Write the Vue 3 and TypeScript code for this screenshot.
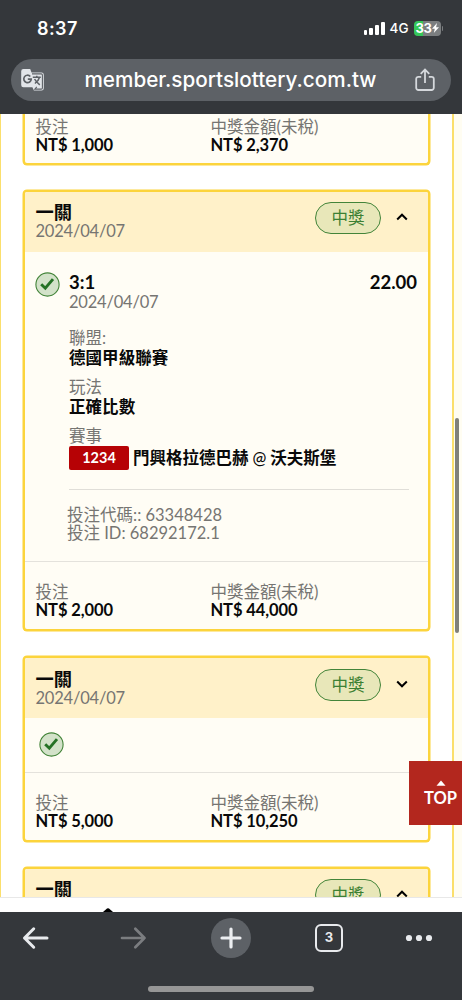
<script setup lang="ts">
interface Slip {
  id: number
  stake: string
  prize: string
  open: boolean
}

const title = '一關'
const date = '2024/04/07'
const slips: Slip[] = [
  { id: 1, stake: 'NT$ 2,000', prize: 'NT$ 44,000', open: true },
  { id: 2, stake: 'NT$ 5,000', prize: 'NT$ 10,250', open: false },
]
const bars: number[] = [5, 7, 10, 13]
</script>

<template>
  <div class="screen">
    <header class="chrome-top">
      <div class="status">
        <span class="clock">8:37</span>
        <div class="signals">
          <div class="bars">
            <i v-for="h in bars" :key="h" :style="{ height: h + 'px' }"></i>
          </div>
          <span class="net">4G</span>
          <div class="battery">
            <span>33</span>
            <svg width="7" height="10" viewBox="0 0 7 10"><path d="M5 0 0 5.700h2.800L1.800 10 7 4.200H4.100z" fill="#fff" /></svg>
          </div>
          <i class="cap"></i>
        </div>
      </div>
      <div class="address">
        <svg class="translate" width="24" height="24" viewBox="0 0 24 24">
          <path d="M2.400 1h6.800l1.300 3.400h10a2.300 2.300 0 0 1 2.300 2.300v13.600a2.300 2.300 0 0 1-2.300 2.300h-7.600l-1.500-3.400H2.400A2.200 2.200 0 0 1 .2 17V3.200A2.200 2.200 0 0 1 2.400 1z" fill="#e2e5e9" />
          <path d="M11 5.900h9.300q1.100 0 1.100 1.100v13q0 1.100-1.100 1.100h-6.500l2-2.300" fill="none" stroke="#5d6166" stroke-width="1.100" />
          <path d="M9.300 8.500A3.700 3.700 0 1 0 10.200 11.100H6.800" fill="none" stroke="#5d6166" stroke-width="1.700" />
          <path d="M11.800 9.300h8M15.800 7.800v1.500M18.400 9.500c-.6 2.600-2.200 4.300-4.500 6M13.600 11c.9 2.100 2.700 3.900 5.200 5.900" fill="none" stroke="#5d6166" stroke-width="1.500" />
        </svg>
        <span class="url">member.sportslottery.com.tw</span>
        <svg class="share" width="20" height="24" viewBox="0 0 20 24">
          <path d="M6.200 8.800H3.400a2.200 2.200 0 0 0-2.200 2.200v8.800A2.200 2.200 0 0 0 3.400 22h13.200a2.200 2.200 0 0 0 2.200-2.200V11a2.200 2.200 0 0 0-2.200-2.200h-2.800M10 15V2M5.700 5.900 10 1.600l4.300 4.300" fill="none" stroke="#d5d8dc" stroke-width="1.800" />
        </svg>
      </div>
    </header>

    <main class="page">
      <div class="list">
        <section class="card first">
          <div class="totals">
            <div><p class="label">投注</p><p class="value">NT$ 1,000</p></div>
            <div><p class="label">中獎金額(未稅)</p><p class="value">NT$ 2,370</p></div>
          </div>
        </section>

        <section v-for="s in slips" :key="s.id" class="card">
          <div class="head">
            <div class="name">
              <h2>{{ title }}</h2>
              <p class="date">{{ date }}</p>
            </div>
            <span class="badge">中獎</span>
            <svg class="chev" width="12" height="8" viewBox="0 0 12 8">
              <path :d="s.open ? 'M1.200 6.500 6 1.700l4.800 4.800' : 'M1.200 1.500 6 6.300l4.800-4.800'" fill="none" stroke="#000" stroke-width="2" />
            </svg>
          </div>

          <div v-if="s.open" class="detail">
            <svg class="tick" width="25" height="25" viewBox="0 0 25 25">
              <circle cx="12.500" cy="12.500" r="11.600" fill="#d3e2c9" stroke="#438439" stroke-width="1.100" />
              <path d="m6.200 12.200 4.100 4L18 7.100" fill="none" stroke="#257225" stroke-width="2.900" />
            </svg>
            <div class="body">
              <div class="pick"><span>3:1</span><span class="odds">22.00</span></div>
              <p class="date">{{ date }}</p>
              <p class="label league">聯盟:</p>
              <p class="value">德國甲級聯賽</p>
              <p class="label play">玩法</p>
              <p class="value">正確比數</p>
              <p class="label match">賽事</p>
              <div class="fixture">
                <span class="code">1234</span>
                <span class="teams">門興格拉德巴赫 <em>@</em> 沃夫斯堡</span>
              </div>
              <div class="ids">
                <p>投注代碼:: 63348428</p>
                <p>投注 ID: 68292172.1</p>
              </div>
            </div>
          </div>
          <div v-else class="compact">
            <svg width="25" height="25" viewBox="0 0 25 25">
              <circle cx="12.500" cy="12.500" r="11.600" fill="#d3e2c9" stroke="#438439" stroke-width="1.100" />
              <path d="m6.200 12.200 4.100 4L18 7.100" fill="none" stroke="#257225" stroke-width="2.900" />
            </svg>
          </div>

          <div class="totals ruled">
            <div><p class="label">投注</p><p class="value">{{ s.stake }}</p></div>
            <div><p class="label">中獎金額(未稅)</p><p class="value">{{ s.prize }}</p></div>
          </div>
        </section>

        <section class="card">
          <div class="head">
            <div class="name">
              <h2>{{ title }}</h2>
              <p class="date">{{ date }}</p>
            </div>
            <span class="badge">中獎</span>
            <svg class="chev" width="12" height="8" viewBox="0 0 12 8">
              <path d="M1.200 6.500 6 1.700l4.800 4.800" fill="none" stroke="#000" stroke-width="2" />
            </svg>
          </div>
        </section>
      </div>
      <div class="gutter"></div>
      <i class="scrollbar"></i>
      <div class="top-btn">
        <svg width="10" height="6" viewBox="0 0 10 6"><path d="M.5 5.700 5 .6l4.500 5.100z" fill="#fff" /></svg>
        <span>TOP</span>
      </div>
    </main>

    <div class="sheet">
      <svg width="10" height="5" viewBox="0 0 10 5"><path d="M0 5V4L4 .6q1-.8 2 0L10 4v1z" fill="#000" /></svg>
    </div>

    <footer class="chrome-bottom">
      <nav class="tools">
        <svg width="98" height="42" viewBox="0 0 98 42">
          <path d="M47 21H24.500M33.700 11.800 24.500 21l9.200 9.200" fill="none" stroke="#e8eaed" stroke-width="3" stroke-linecap="round" stroke-linejoin="round" />
        </svg>
        <svg width="98" height="42" viewBox="0 0 98 42">
          <path d="M24 21h22.500M37.300 11.800l9.200 9.200-9.200 9.200" fill="none" stroke="#7b7d80" stroke-width="2.700" stroke-linecap="round" stroke-linejoin="round" />
        </svg>
        <svg width="70" height="42" viewBox="0 0 70 42">
          <circle cx="35" cy="21" r="20" fill="#5d6166" />
          <path d="M35 12v18M26 21h18" fill="none" stroke="#eceef1" stroke-width="3.200" stroke-linecap="round" />
        </svg>
        <div class="tabs"><span>3</span></div>
        <svg class="more" width="28" height="42" viewBox="0 0 28 42">
          <g fill="#e8eaed"><circle cx="4" cy="21" r="3.100" /><circle cx="14" cy="21" r="3.100" /><circle cx="24" cy="21" r="3.100" /></g>
        </svg>
      </nav>
      <i class="home"></i>
    </footer>
  </div>
</template>

<style>
html,
body {
  margin: 0;
  overflow: hidden;
}
</style>

<style scoped>
.screen {
  width: 462px;
  height: 1000px;
  display: flex;
  flex-direction: column;
  overflow: hidden;
  background: #fff;
  color: #090909;
  font-family: Lato, "Noto Sans CJK TC", sans-serif;
  font-size: 16.500px;
}
p,
h2 {
  margin: 0;
}
i {
  display: block;
}
svg {
  display: block;
  flex: none;
}
.chrome-top {
  flex: none;
  height: 114px;
  box-sizing: border-box;
  padding: 16px 11px 0;
  background: #34373b;
  color: #fff;
  font-family: Inter, sans-serif;
}
.status {
  height: 24px;
  display: flex;
  align-items: center;
  justify-content: space-between;
  padding: 0 8px 0 26px;
}
.clock {
  font-size: 18px;
  font-weight: 600;
  letter-spacing: 0.400px;
}
.signals {
  display: flex;
  align-items: center;
}
.bars {
  display: flex;
  align-items: flex-end;
  gap: 2px;
  height: 13px;
}
.bars i {
  width: 3.700px;
  border-radius: 1px;
  background: #fff;
}
.net {
  margin-left: 5px;
  font-size: 13.500px;
  font-weight: 500;
}
.battery {
  display: flex;
  align-items: center;
  width: 27px;
  height: 15px;
  margin-left: 5px;
  box-sizing: border-box;
  padding-left: 2px;
  border-radius: 4px;
  background: linear-gradient(90deg, #35c75a 0 9px, #7b7e80 9px);
  font-size: 13px;
  font-weight: 700;
  letter-spacing: -0.300px;
}
.cap {
  width: 1.500px;
  height: 5px;
  margin-left: 1px;
  border-radius: 0 2px 2px 0;
  background: #7b7e80;
}
.address {
  height: 42px;
  margin-top: 19px;
  display: flex;
  align-items: center;
  box-sizing: border-box;
  padding: 0 16px 0 10px;
  border-radius: 21px;
  background: #5d6166;
}
.url {
  flex: 1;
  margin-right: -1px;
  text-align: center;
  font-size: 20.700px;
  font-weight: 500;
  line-height: 40px;
  white-space: nowrap;
}
.share {
  position: relative;
}
.page {
  position: relative;
  flex: none;
  height: 783px;
  display: flex;
  overflow: hidden;
}
.list {
  width: 454px;
  box-sizing: border-box;
  padding: 0 22px;
  border-left: 1px solid #fbdf6c;
  border-right: 2px solid #fbdf6c;
}
.gutter {
  flex: 1;
  background: #fffdf2;
}
.scrollbar {
  position: absolute;
  left: 455px;
  top: 304px;
  width: 4px;
  height: 215px;
  border-radius: 2px;
  background: #80807a;
}
.card {
  width: 403px;
  margin-bottom: 24.500px;
  border: 2px solid #fcd43c;
  border-radius: 4px;
  box-shadow: 0 0 0 0.500px #fcd43c;
  background: #fffdf5;
  overflow: hidden;
}
.card.first {
  border-top: 0;
  border-radius: 0 0 4px 4px;
}
.totals {
  display: grid;
  grid-template-columns: 175px 1fr;
  padding: 21px 0 10.300px 10.500px;
}
.card.first .totals {
  padding-top: 4px;
  padding-bottom: 9px;
}
.ruled {
  border-top: 1px solid #e4e2dc;
}
.label {
  color: #767572;
  line-height: 18px;
  font-weight: 400;
}
.value {
  line-height: 18px;
  font-weight: 700;
  letter-spacing: -0.100px;
}
.head {
  height: 60.500px;
  display: flex;
  align-items: center;
  box-sizing: border-box;
  padding: 0 20px 0 10.500px;
  background: #fff1c9;
}
.name {
  flex: 1;
}
h2 {
  font-size: 18.300px;
  line-height: 20px;
  font-weight: 700;
}
.date {
  color: #767572;
  line-height: 19px;
  letter-spacing: -0.200px;
}
.badge {
  width: 66px;
  height: 32px;
  box-sizing: border-box;
  margin: -7px 15px 0 0;
  border: 1px solid #438439;
  border-radius: 16px;
  background: #e8e7b9;
  color: #3c8033;
  text-align: center;
  line-height: 30px;
}
.chev {
  margin-top: -9px;
}
.detail {
  display: flex;
  height: 309px;
}
.tick {
  margin: 20px 9px 0 10px;
}
.body {
  flex: 1;
  padding-top: 20px;
}
.pick {
  display: flex;
  justify-content: space-between;
  padding-right: 11px;
  font-size: 18.500px;
  line-height: 20px;
  font-weight: 700;
}
.pick + .date {
  line-height: 20px;
}
.league {
  margin-top: 16px;
  line-height: 20px;
}
.league + .value,
.play + .value {
  line-height: 21px;
  letter-spacing: 0.050px;
}
.play,
.match {
  margin-top: 8px;
  line-height: 20px;
}
.fixture {
  display: flex;
  align-items: center;
  width: 340px;
  padding-bottom: 19px;
  border-bottom: 1px solid #e0ded8;
}
.code {
  width: 60px;
  height: 24px;
  margin-right: 4px;
  border-radius: 2px;
  background: #b60205;
  color: #fff;
  text-align: center;
  font-size: 14.500px;
  font-weight: 700;
  line-height: 24px;
}
.teams {
  font-weight: 700;
  line-height: 24px;
  white-space: nowrap;
}
.teams em {
  font-style: normal;
  font-weight: 500;
}
.ids {
  margin: 16px 0 0 -2px;
  color: #767572;
  line-height: 18px;
}
.compact {
  height: 53.500px;
  box-sizing: border-box;
  padding: 14px 0 0 14px;
}
.top-btn {
  position: absolute;
  left: 409px;
  top: 647px;
  width: 53px;
  height: 64px;
  box-sizing: border-box;
  padding: 19px 0 0 10px;
  display: flex;
  flex-direction: column;
  align-items: center;
  background: #b3271e;
  color: #fff;
  font-size: 16.500px;
  font-weight: 700;
}
.top-btn span {
  line-height: 25px;
}
.sheet {
  flex: none;
  height: 15px;
  box-sizing: border-box;
  padding: 10px 0 0 103px;
  border-top: 1px solid #e8e8e8;
  background: #fff;
}
.chrome-bottom {
  flex: none;
  height: 88px;
  background: #34373b;
}
.tools {
  display: flex;
  align-items: center;
  height: 42px;
  padding-top: 4.500px;
}
.tabs {
  width: 28px;
  height: 28px;
  box-sizing: border-box;
  margin-left: 49px;
  border: 2.500px solid #e8eaed;
  border-radius: 6px;
  display: grid;
  place-items: center;
  color: #e8eaed;
  font: 700 13px/1 Inter, sans-serif;
}
.more {
  margin-left: 62px;
}
.home {
  width: 166px;
  height: 6px;
  margin: 27px auto 0;
  border-radius: 3px;
  background: #969696;
}
</style>
